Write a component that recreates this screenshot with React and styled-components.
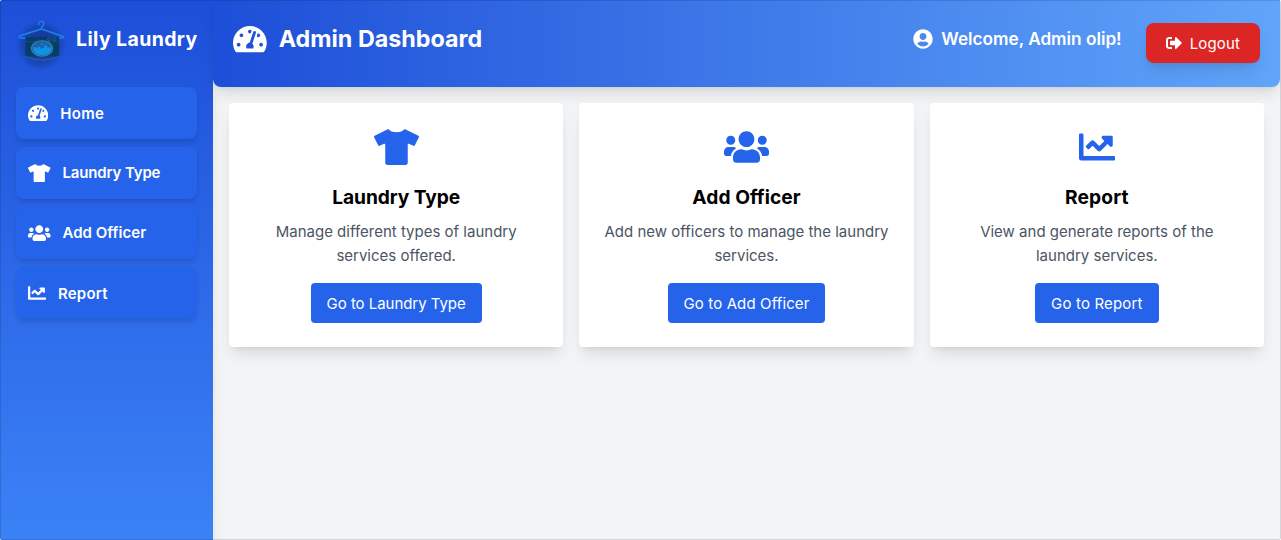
import React from "react";
import styled, { createGlobalStyle } from "styled-components";
import {
  FaTachometerAlt,
  FaTshirt,
  FaUsers,
  FaChartLine,
  FaUserCircle,
  FaSignOutAlt,
} from "react-icons/fa";

const GlobalStyle = createGlobalStyle`
  *, *::before, *::after { box-sizing: border-box; }
  body {
    margin: 0;
    font-family: Inter, "Liberation Sans", sans-serif;
    font-size: 15px;
    line-height: 24px;
    color: #000;
  }
  h1, h2, h3, p { margin: 0; }
  svg { display: block; flex-shrink: 0; }
`;

const Page = styled.div`
  position: relative;
  display: flex;
  width: 100%;
  height: 540px;
  overflow: hidden;
  background: #f3f4f6;
  border-radius: 2px;
`;

const Frame = styled.div`
  position: absolute;
  inset: 0;
  z-index: 5;
  border: 1px solid rgba(0, 0, 0, 0.12);
  border-radius: 2px;
  pointer-events: none;
`;

const Icon = styled.span`
  display: block;
  flex: none;
  width: ${(p) => (p.$units / 512) * p.$size}px;
  height: ${(p) => p.$size}px;

  svg {
    width: 100%;
    height: 100%;
  }
`;

const Sidebar = styled.aside`
  display: flex;
  flex-direction: column;
  flex: none;
  width: 213px;
  padding: 15px 16px;
  background: linear-gradient(to bottom, #1d4ed8, #3b82f6);
  box-shadow: 0 10px 15px -3px rgba(0, 0, 0, 0.1), 0 4px 6px -4px rgba(0, 0, 0, 0.1);
`;

const Brand = styled.div`
  display: flex;
  align-items: center;
  gap: 12px;
  height: 48px;
  margin-bottom: 24px;
`;

const LogoMark = styled.svg`
  width: 48px;
  height: 60px;
  overflow: visible;
`;

const BrandName = styled.h2`
  font-size: 19.5px;
  line-height: 28px;
  font-weight: 700;
  letter-spacing: 0.38px;
  color: #fff;
  white-space: nowrap;
`;

const Nav = styled.nav`
  display: flex;
  flex-direction: column;
  gap: 8px;
`;

const NavItem = styled.a`
  display: flex;
  align-items: center;
  gap: 12px;
  height: 52px;
  padding: 12px;
  border-radius: 8px;
  background: #2563eb;
  color: #fff;
  font-weight: 560;
  font-size: 15px;
  box-shadow: 0 4px 6px -1px rgba(0, 0, 0, 0.1), 0 2px 4px -2px rgba(0, 0, 0, 0.1);
`;

const NavLabel = styled.span`
  padding-top: ${(p) => (p.$drop ? 2 : 0)}px;
  letter-spacing: ${(p) => p.$tracking}px;
`;

const Content = styled.div`
  display: flex;
  flex-direction: column;
  flex: 1;
  min-width: 0;
  padding-right: 1px;
`;

const Header = styled.header`
  display: flex;
  align-items: flex-start;
  justify-content: space-between;
  height: 87px;
  padding: 23px 20px 24px;
  border-radius: 0 0 8px 8px;
  background: linear-gradient(to right, #1d4ed8, #60a5fa);
  color: #fff;
  box-shadow: 0 10px 15px -3px rgba(0, 0, 0, 0.1), 0 4px 6px -4px rgba(0, 0, 0, 0.1);
`;

const Title = styled.h1`
  display: flex;
  align-items: center;
  gap: 12px;
  font-size: 23.3px;
  line-height: 32px;
  font-weight: 700;
`;

const Account = styled.div`
  display: flex;
  align-items: flex-start;
  gap: 24px;
`;

const Welcome = styled.span`
  display: flex;
  align-items: center;
  gap: 8px;
  height: 32px;
  font-size: 17.2px;
  font-weight: 560;
`;

const LogoutButton = styled.a`
  display: flex;
  align-items: center;
  gap: 8px;
  height: 40px;
  padding: 8px 20px;
  border-radius: 8px;
  background: #dc2626;
  font-weight: 380;
  letter-spacing: 0.15px;
  box-shadow: 0 10px 15px -3px rgba(0, 0, 0, 0.1), 0 4px 6px -4px rgba(0, 0, 0, 0.1);
`;

const LogoutLabel = styled.span`
  padding-top: 1px;
`;

const Cards = styled.main`
  display: grid;
  grid-template-columns: repeat(3, 1fr);
  gap: 16px;
  padding: 16px;
`;

const Card = styled.section`
  display: flex;
  flex-direction: column;
  align-items: center;
  padding: 24px;
  border-radius: 4px;
  background: #fff;
  text-align: center;
  box-shadow: 0 10px 15px -3px rgba(0, 0, 0, 0.1), 0 4px 6px -4px rgba(0, 0, 0, 0.1);
`;

const CardIcon = styled.div`
  display: flex;
  align-items: center;
  height: 40px;
  margin-bottom: 16px;
  color: #2563eb;
`;

const CardTitle = styled.h3`
  font-size: 19.2px;
  line-height: 28px;
  font-weight: 700;
  letter-spacing: ${(p) => p.$tracking}px;
  margin-bottom: 9px;
`;

const CardText = styled.p`
  color: #4b5563;
  font-weight: 380;
  letter-spacing: 0;
  margin-bottom: 15px;
`;

const CardButton = styled.a`
  padding: 9px 16px 7px;
  border-radius: 4px;
  background: #2563eb;
  color: #fff;
  font-weight: 380;
  letter-spacing: ${(p) => p.$tracking}px;
`;

function Logo() {
  return (
    <LogoMark viewBox="-1 0 48 60" fill="none">
      <defs>
        <radialGradient id="logoShade">
          <stop offset="0.5" stopColor="#000" stopOpacity="0.28" />
          <stop offset="0.8" stopColor="#000" stopOpacity="0.13" />
          <stop offset="1" stopColor="#000" stopOpacity="0" />
        </radialGradient>
      </defs>
      <circle cx="24" cy="36.500" r="25" fill="url(#logoShade)" />
      <path
        d="M21.500 15.500c0-4.500 6.500-4 5.200.2-.5 1.500-2.500 1.500-2.500 4.300L45 27c2.500 1 2 2.500-.5 2H4.500c-3 0-3-1.500-.5-2.500L24.200 20"
        stroke="#1c84e8"
        strokeWidth="1.400"
        strokeLinecap="round"
      />
      <path d="M8.500 28h33.500v19.500h-33.500z" fill="#033f66" />
      <path d="M8.500 32.500h33.500" stroke="#145383" strokeWidth=".6" />
      <circle cx="32" cy="30.300" r="1.500" stroke="#1b62a5" strokeWidth=".9" />
      <circle cx="37.500" cy="30.300" r="1.500" stroke="#1b62a5" strokeWidth=".9" />
      <ellipse cx="25" cy="39.500" rx="10.500" ry="7.700" fill="#1268ac" stroke="#4f74b0" strokeWidth="1.100" />
      <path d="M16 38.500c3-1 5 1.500 8 1s3.500-2 5.500-1.500 3 .5 5 0c.3 5-4 8.200-9.300 8.200s-9.200-3-9.200-7.700z" fill="#0996e2" />
      <circle cx="22" cy="39" r="1.600" fill="#2583e0" />
      <circle cx="28.500" cy="37.500" r="1.500" fill="#2583e0" />
      <circle cx="24.500" cy="35" r=".9" fill="#2583e0" />
      <path
        d="M5.500 49c2-2.500 5-1 5.500 0 2.500-1 4 .5 6 1.200 3 1.500 5-.5 8 .8 3 1 5-1.600 8-.8 3 0 3-2.300 6-1.300 1-2 3.500-2.500 5.500-.5"
        stroke="#2168bc"
        strokeWidth="1"
      />
    </LogoMark>
  );
}

const navItems = [
  { label: "Home", Glyph: FaTachometerAlt, units: 576, drop: true, tracking: 0.3 },
  { label: "Laundry Type", Glyph: FaTshirt, units: 640, tracking: -0.15 },
  { label: "Add Officer", Glyph: FaUsers, units: 640, tracking: 0.03 },
  { label: "Report", Glyph: FaChartLine, units: 512, drop: true, tracking: 0.2 },
];

const cards = [
  {
    title: "Laundry Type",
    text: "Manage different types of laundry services offered.",
    Glyph: FaTshirt,
    units: 640,
    titleTracking: -0.08,
    buttonTracking: -0.04,
  },
  {
    title: "Add Officer",
    text: "Add new officers to manage the laundry services.",
    Glyph: FaUsers,
    units: 640,
    titleTracking: 0.05,
    buttonTracking: 0.12,
  },
  {
    title: "Report",
    text: "View and generate reports of the laundry services.",
    Glyph: FaChartLine,
    units: 512,
    titleTracking: 0.15,
    buttonTracking: 0.17,
  },
];

export default function App() {
  return (
    <Page>
      <GlobalStyle />
      <Sidebar>
        <Brand>
          <Logo />
          <BrandName>Lily Laundry</BrandName>
        </Brand>
        <Nav>
          {navItems.map(({ label, Glyph, units, drop, tracking }) => (
            <NavItem key={label}>
              <Icon $units={units} $size={18}><Glyph /></Icon>
              <NavLabel $drop={drop} $tracking={tracking}>{label}</NavLabel>
            </NavItem>
          ))}
        </Nav>
      </Sidebar>
      <Content>
        <Header>
          <Title>
            <Icon $units={576} $size={30}><FaTachometerAlt /></Icon>
            <span>Admin Dashboard</span>
          </Title>
          <Account>
            <Welcome>
              <Icon $units={512} $size={20}><FaUserCircle /></Icon>
              <span>Welcome, Admin olip!</span>
            </Welcome>
            <LogoutButton>
              <Icon $units={512} $size={16}><FaSignOutAlt /></Icon>
              <LogoutLabel>Logout</LogoutLabel>
            </LogoutButton>
          </Account>
        </Header>
        <Cards>
          {cards.map(({ title, text, Glyph, units, titleTracking, buttonTracking }) => (
            <Card key={title}>
              <CardIcon>
                <Icon $units={units} $size={36}><Glyph /></Icon>
              </CardIcon>
              <CardTitle $tracking={titleTracking}>{title}</CardTitle>
              <CardText>{text}</CardText>
              <CardButton $tracking={buttonTracking}>Go to {title}</CardButton>
            </Card>
          ))}
        </Cards>
      </Content>
      <Frame />
    </Page>
  );
}
